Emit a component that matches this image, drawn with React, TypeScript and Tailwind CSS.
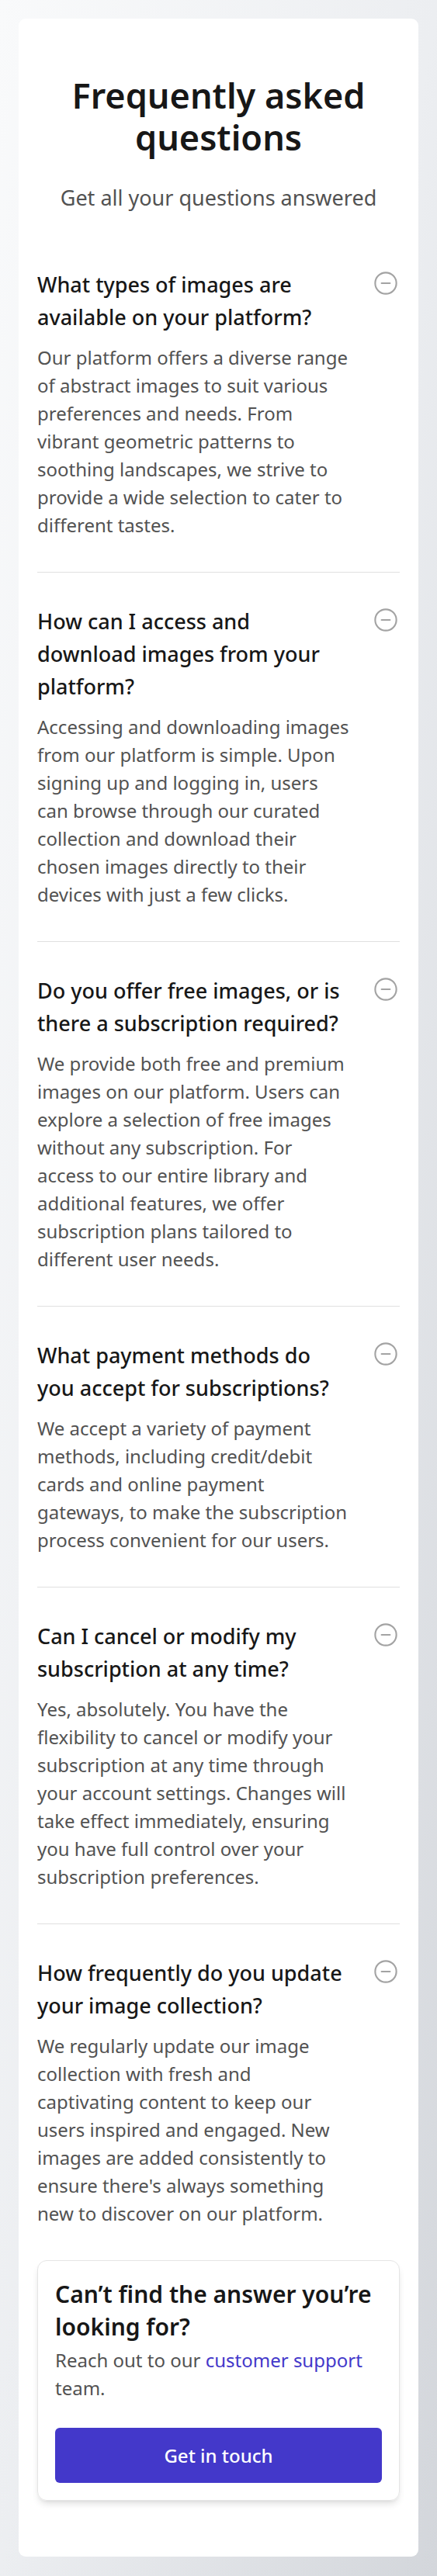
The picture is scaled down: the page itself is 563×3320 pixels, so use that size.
import React from 'react';

interface Faq {
  question: string;
  answer: string;
}

const faqs: Faq[] = [
  {
    question: 'What types of images are available on your platform?',
    answer:
      'Our platform offers a diverse range of abstract images to suit various preferences and needs. From vibrant geometric patterns to soothing landscapes, we strive to provide a wide selection to cater to different tastes.',
  },
  {
    question: 'How can I access and download images from your platform?',
    answer:
      'Accessing and downloading images from our platform is simple. Upon signing up and logging in, users can browse through our curated collection and download their chosen images directly to their devices with just a few clicks.',
  },
  {
    question: 'Do you offer free images, or is there a subscription required?',
    answer:
      'We provide both free and premium images on our platform. Users can explore a selection of free images without any subscription. For access to our entire library and additional features, we offer subscription plans tailored to different user needs.',
  },
  {
    question: 'What payment methods do you accept for subscriptions?',
    answer:
      'We accept a variety of payment methods, including credit/debit cards and online payment gateways, to make the subscription process convenient for our users.',
  },
  {
    question: 'Can I cancel or modify my subscription at any time?',
    answer:
      'Yes, absolutely. You have the flexibility to cancel or modify your subscription at any time through your account settings. Changes will take effect immediately, ensuring you have full control over your subscription preferences.',
  },
  {
    question: 'How frequently do you update your image collection?',
    answer:
      "We regularly update our image collection with fresh and captivating content to keep our users inspired and engaged. New images are added consistently to ensure there's always something new to discover on our platform.",
  },
];

function MinusCircle() {
  return (
    <svg className="w-[36px] h-[36px] shrink-0" viewBox="0 0 24 24" fill="none" stroke="#a3a3a3" strokeWidth={1.4}>
      <circle cx="12" cy="12" r="9.1" />
      <path strokeLinecap="round" d="M8.4 12h7.2" />
    </svg>
  );
}

export default function App() {
  return (
    <div className="min-h-screen bg-linear-to-br from-[#f9fafb] via-[#eceef1] to-[#d3d6db] p-[24px] font-['Noto_Sans',sans-serif]">
      <div className="bg-white rounded-[9px] px-[24px] py-[72px]">
        {/* Header */}
        <h1 className="text-center text-[45px] leading-[54px] font-semibold text-[#171717] px-[30px]">
          Frequently asked questions
        </h1>
        <p className="mt-[30px] text-center text-[27px] leading-[42px] text-[#525252]">Get all your questions answered</p>

        {/* List */}
        <div className="mt-[70px]">
          {faqs.map((faq, i) => (
            <div
              key={faq.question}
              className={i === 0 ? 'pb-[42px]' : 'pt-[42px] pb-[42px] border-t border-[#e0e0e0]'}
            >
              <div className="flex justify-between gap-[31px]">
                <h3 className="text-[27px] leading-[42px] font-medium text-[#171717]">{faq.question}</h3>
                <div className="pt-[1px]">
                  <MinusCircle />
                </div>
              </div>
              <p className="mt-[13px] pr-[63px] text-[24px] leading-[36px] text-[#525252]">{faq.answer}</p>
            </div>
          ))}
        </div>

        {/* Contact box */}
        <div className="rounded-[12px] border border-[#e5e5e5] p-[22px] shadow-[0_6px_10px_-2px_rgba(0,0,0,0.12),0_2px_4px_-2px_rgba(0,0,0,0.08)]">
          <h4 className="text-[30px] leading-[42px] font-semibold text-[#171717]">Can’t find the answer you’re looking for?</h4>
          <p className="mt-[4px] text-[24px] leading-[36px] text-[#525252]">
            Reach out to our <span className="text-[#4338ca]">customer support</span> team.
          </p>
          <button
            type="button"
            className="mt-[33px] w-full h-[71px] rounded-[6px] bg-[#4338ca] text-white text-[24px] font-medium flex items-center justify-center"
          >
            Get in touch
          </button>
        </div>
      </div>
    </div>
  );
}
